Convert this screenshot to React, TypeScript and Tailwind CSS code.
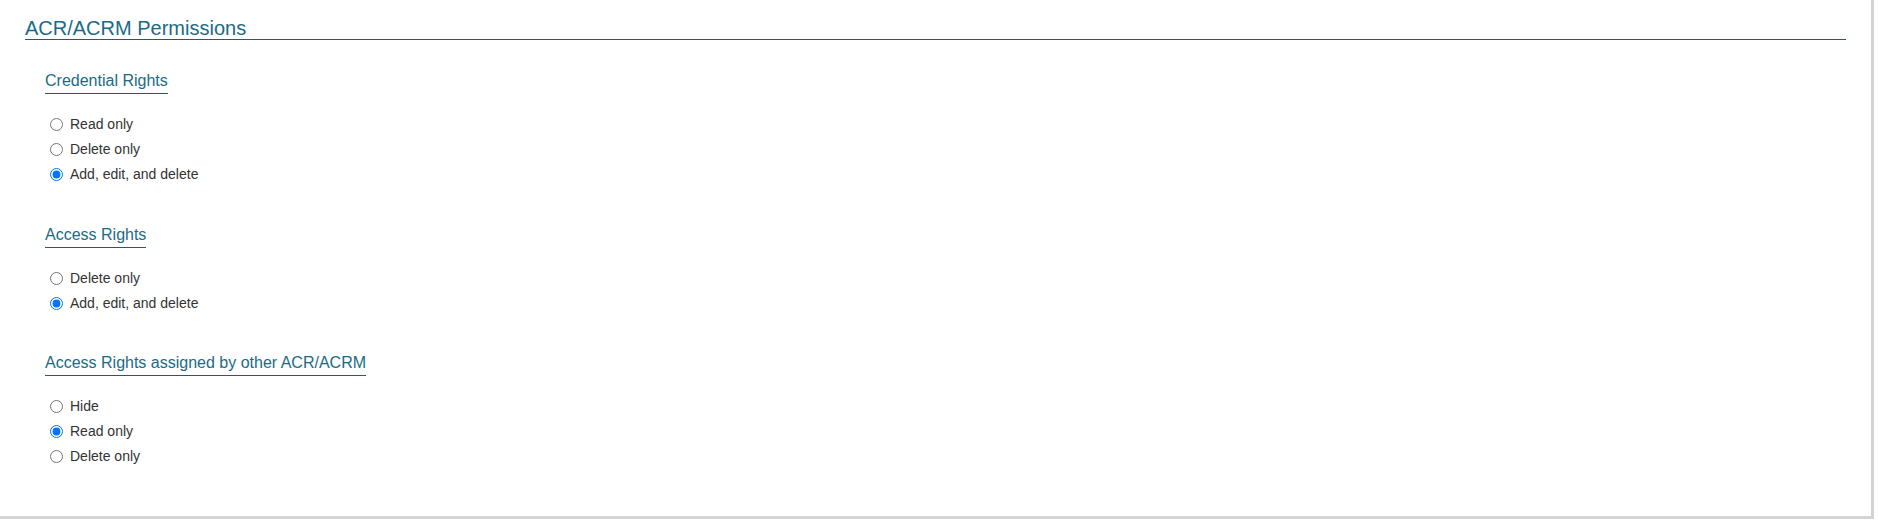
import React from "react";

type Group = {
  name: string;
  title: string;
  mt: string;
  options: { label: string; checked?: boolean }[];
};

const groups: Group[] = [
  {
    name: "credential",
    title: "Credential Rights",
    mt: "mt-[32px]",
    options: [
      { label: "Read only" },
      { label: "Delete only" },
      { label: "Add, edit, and delete", checked: true },
    ],
  },
  {
    name: "access",
    title: "Access Rights",
    mt: "mt-[39px]",
    options: [
      { label: "Delete only" },
      { label: "Add, edit, and delete", checked: true },
    ],
  },
  {
    name: "other",
    title: "Access Rights assigned by other ACR/ACRM",
    mt: "mt-[38px]",
    options: [
      { label: "Hide" },
      { label: "Read only", checked: true },
      { label: "Delete only" },
    ],
  },
];

export default function App() {
  return (
    <div
      className="w-[1879px] h-[524px] bg-white"
      style={{ fontFamily: '"Liberation Sans", Arial, sans-serif' }}
    >
      <div className="w-[1874px] h-[519px] bg-white border-r-[3px] border-b-[3px] border-[#d3d3d3] px-[25px] pt-[17px]">
        <h2 className="text-[20px] leading-[22px] text-[#1b6b85] border-b border-[#1e5d70] font-normal">
          ACR/ACRM Permissions
        </h2>
        <div className="pl-[20px]">
          {groups.map((g) => (
            <div key={g.name} className={g.mt}>
              <div className="flex">
                <h3 className="text-[16px] leading-[18px] pb-[3px] text-[#1b6b85] border-b border-[#1e5d70] font-normal">
                  {g.title}
                </h3>
              </div>
              <div className="mt-[18px] flex flex-col">
                {g.options.map((o) => (
                  <label
                    key={o.label}
                    className="flex items-center h-[25px] text-[14px] text-[#333333]"
                  >
                    <input
                      type="radio"
                      name={g.name}
                      defaultChecked={!!o.checked}
                      className="m-0 ml-[5px] w-[13px] h-[13px]"
                    />
                    <span className="pl-[7px]">{o.label}</span>
                  </label>
                ))}
              </div>
            </div>
          ))}
        </div>
      </div>
    </div>
  );
}
